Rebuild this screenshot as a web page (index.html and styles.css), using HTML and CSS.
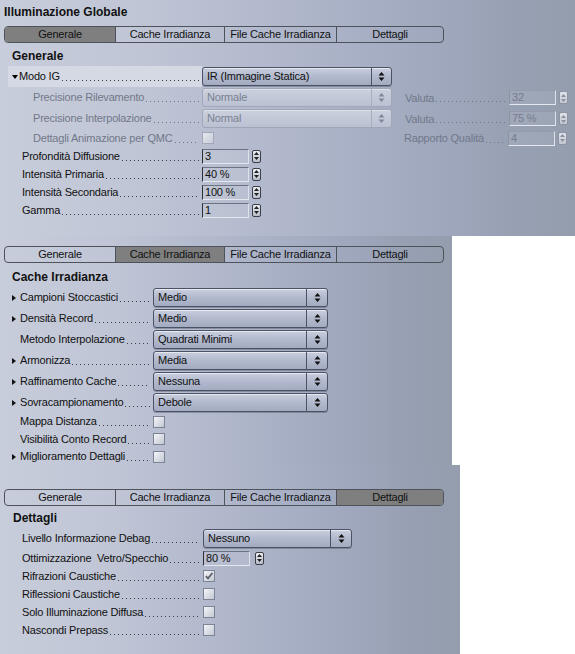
FILE: index.html
```html
<!DOCTYPE html>
<html lang="it">
<head>
    <meta charset="UTF-8">
    <title>Illuminazione Globale</title>
    <link rel="stylesheet" href="styles.css">
</head>
<body>
    <!-- pannello 1: Generale -->
    <div class="panel p1">
        <div class="title">Illuminazione Globale</div>
        <div class="tabs">
            <div class="tab t1 active">Generale</div>
            <div class="tab t2">Cache Irradianza</div>
            <div class="tab t3">File Cache Irradianza</div>
            <div class="tab t4">Dettagli</div>
        </div>
        <div class="heading">Generale</div>
        <div class="rows w1">
            <div class="row sel">
                <div class="lab hl tri-pad"><span class="tri down"></span>Modo IG<span class="dots"></span></div>
                <div class="select s1"><span class="val">IR (Immagine Statica)</span><span class="arr"><svg width="7" height="9" viewBox="0 0 7 9"><path d="M3.5 0L6.5 3.5H0.5z M3.5 9L0.5 5.5H6.5z" fill="#111"/></svg></span></div>
            </div>
            <div class="row sel">
                <div class="lab off">Precisione Rilevamento<span class="dots"></span></div>
                <div class="select s1 dis"><span class="val">Normale</span><span class="arr"><svg width="7" height="9" viewBox="0 0 7 9"><path d="M3.5 0L6.5 3.5H0.5z M3.5 9L0.5 5.5H6.5z" fill="#80879a"/></svg></span></div>
                <div class="lab2">Valuta<span class="dots"></span></div>
                <div class="field dis">32</div>
                <div class="spin dis"><svg width="5" height="8" viewBox="0 0 5 8"><path d="M2.5 0L5 3H0z M2.5 8L0 5H5z" fill="#8a90a0"/></svg></div>
            </div>
            <div class="row sel">
                <div class="lab off">Precisione Interpolazione<span class="dots"></span></div>
                <div class="select s1 dis"><span class="val">Normal</span><span class="arr"><svg width="7" height="9" viewBox="0 0 7 9"><path d="M3.5 0L6.5 3.5H0.5z M3.5 9L0.5 5.5H6.5z" fill="#80879a"/></svg></span></div>
                <div class="lab2">Valuta<span class="dots"></span></div>
                <div class="field dis">75 %</div>
                <div class="spin dis"><svg width="5" height="8" viewBox="0 0 5 8"><path d="M2.5 0L5 3H0z M2.5 8L0 5H5z" fill="#8a90a0"/></svg></div>
            </div>
            <div class="row num">
                <div class="lab off">Dettagli Animazione per QMC<span class="dots"></span></div>
                <div class="check dis"></div>
                <div class="lab2 shift">Rapporto Qualità<span class="dots"></span></div>
                <div class="field dis">4</div>
                <div class="spin dis"><svg width="5" height="8" viewBox="0 0 5 8"><path d="M2.5 0L5 3H0z M2.5 8L0 5H5z" fill="#8a90a0"/></svg></div>
            </div>
            <div class="row num">
                <div class="lab">Profondità Diffusione<span class="dots"></span></div>
                <div class="field">3</div>
                <div class="spin"><svg width="5" height="8" viewBox="0 0 5 8"><path d="M2.5 0L5 3H0z M2.5 8L0 5H5z" fill="#222"/></svg></div>
            </div>
            <div class="row num">
                <div class="lab">Intensità Primaria<span class="dots"></span></div>
                <div class="field">40 %</div>
                <div class="spin"><svg width="5" height="8" viewBox="0 0 5 8"><path d="M2.5 0L5 3H0z M2.5 8L0 5H5z" fill="#222"/></svg></div>
            </div>
            <div class="row num">
                <div class="lab">Intensità Secondaria<span class="dots"></span></div>
                <div class="field">100 %</div>
                <div class="spin"><svg width="5" height="8" viewBox="0 0 5 8"><path d="M2.5 0L5 3H0z M2.5 8L0 5H5z" fill="#222"/></svg></div>
            </div>
            <div class="row num">
                <div class="lab">Gamma<span class="dots"></span></div>
                <div class="field">1</div>
                <div class="spin"><svg width="5" height="8" viewBox="0 0 5 8"><path d="M2.5 0L5 3H0z M2.5 8L0 5H5z" fill="#222"/></svg></div>
            </div>
        </div>
    </div>

    <!-- pannello 2: Cache Irradianza -->
    <div class="panel p2">
        <div class="tabs">
            <div class="tab t1">Generale</div>
            <div class="tab t2 active">Cache Irradianza</div>
            <div class="tab t3">File Cache Irradianza</div>
            <div class="tab t4">Dettagli</div>
        </div>
        <div class="heading">Cache Irradianza</div>
        <div class="rows w2">
            <div class="row sel">
                <div class="lab tri-pad"><span class="tri right"></span>Campioni Stoccastici<span class="dots"></span></div>
                <div class="select s2"><span class="val">Medio</span><span class="arr"><svg width="7" height="9" viewBox="0 0 7 9"><path d="M3.5 0L6.5 3.5H0.5z M3.5 9L0.5 5.5H6.5z" fill="#111"/></svg></span></div>
            </div>
            <div class="row sel">
                <div class="lab tri-pad"><span class="tri right"></span>Densità Record<span class="dots"></span></div>
                <div class="select s2"><span class="val">Medio</span><span class="arr"><svg width="7" height="9" viewBox="0 0 7 9"><path d="M3.5 0L6.5 3.5H0.5z M3.5 9L0.5 5.5H6.5z" fill="#111"/></svg></span></div>
            </div>
            <div class="row sel">
                <div class="lab">Metodo Interpolazione<span class="dots"></span></div>
                <div class="select s2"><span class="val">Quadrati Minimi</span><span class="arr"><svg width="7" height="9" viewBox="0 0 7 9"><path d="M3.5 0L6.5 3.5H0.5z M3.5 9L0.5 5.5H6.5z" fill="#111"/></svg></span></div>
            </div>
            <div class="row sel">
                <div class="lab tri-pad"><span class="tri right"></span>Armonizza<span class="dots"></span></div>
                <div class="select s2"><span class="val">Media</span><span class="arr"><svg width="7" height="9" viewBox="0 0 7 9"><path d="M3.5 0L6.5 3.5H0.5z M3.5 9L0.5 5.5H6.5z" fill="#111"/></svg></span></div>
            </div>
            <div class="row sel">
                <div class="lab tri-pad"><span class="tri right"></span>Raffinamento Cache<span class="dots"></span></div>
                <div class="select s2"><span class="val">Nessuna</span><span class="arr"><svg width="7" height="9" viewBox="0 0 7 9"><path d="M3.5 0L6.5 3.5H0.5z M3.5 9L0.5 5.5H6.5z" fill="#111"/></svg></span></div>
            </div>
            <div class="row sel">
                <div class="lab tri-pad"><span class="tri right"></span>Sovracampionamento<span class="dots"></span></div>
                <div class="select s2"><span class="val">Debole</span><span class="arr"><svg width="7" height="9" viewBox="0 0 7 9"><path d="M3.5 0L6.5 3.5H0.5z M3.5 9L0.5 5.5H6.5z" fill="#111"/></svg></span></div>
            </div>
            <div class="row chk">
                <div class="lab">Mappa Distanza<span class="dots"></span></div>
                <div class="check"></div>
            </div>
            <div class="row chk">
                <div class="lab">Visibilità Conto Record<span class="dots"></span></div>
                <div class="check"></div>
            </div>
            <div class="row chk">
                <div class="lab tri-pad"><span class="tri right"></span>Miglioramento Dettagli<span class="dots"></span></div>
                <div class="check"></div>
            </div>
        </div>
    </div>

    <!-- pannello 3: Dettagli -->
    <div class="panel p3">
        <div class="tabs">
            <div class="tab t1">Generale</div>
            <div class="tab t2">Cache Irradianza</div>
            <div class="tab t3">File Cache Irradianza</div>
            <div class="tab t4 active">Dettagli</div>
        </div>
        <div class="heading">Dettagli</div>
        <div class="rows w3">
            <div class="row sel">
                <div class="lab">Livello Informazione Debag<span class="dots"></span></div>
                <div class="select s3"><span class="val">Nessuno</span><span class="arr"><svg width="7" height="9" viewBox="0 0 7 9"><path d="M3.5 0L6.5 3.5H0.5z M3.5 9L0.5 5.5H6.5z" fill="#111"/></svg></span></div>
            </div>
            <div class="row num">
                <div class="lab">Ottimizzazione&nbsp; Vetro/Specchio<span class="dots"></span></div>
                <div class="field">80 %</div>
                <div class="spin"><svg width="5" height="8" viewBox="0 0 5 8"><path d="M2.5 0L5 3H0z M2.5 8L0 5H5z" fill="#222"/></svg></div>
            </div>
            <div class="row num">
                <div class="lab">Rifrazioni Caustiche<span class="dots"></span></div>
                <div class="check"><svg width="10" height="10" viewBox="0 0 10 10"><path d="M1.8 5.2L4 7.4L8.4 2" stroke="#5a5e68" stroke-width="1.7" fill="none"/></svg></div>
            </div>
            <div class="row num">
                <div class="lab">Riflessioni Caustiche<span class="dots"></span></div>
                <div class="check"></div>
            </div>
            <div class="row num">
                <div class="lab">Solo Illuminazione Diffusa<span class="dots"></span></div>
                <div class="check"></div>
            </div>
            <div class="row num">
                <div class="lab">Nascondi Prepass<span class="dots"></span></div>
                <div class="check"></div>
            </div>
        </div>
    </div>
</body>
</html>
```

FILE: styles.css
```css
body {
    margin: 0;
    padding: 0;
    background: #fff;
    font-family: "Liberation Sans", Arial, sans-serif;
    font-size: 11px;
    letter-spacing: -0.2px;
    color: #111;
}

.panel {
    padding-left: 4px;
    box-sizing: border-box;
    overflow: hidden;
    background: linear-gradient(to right, #c8cddb 0%, #bfc5d5 25%, #b0b7cb 50%, #a2aac0 72%, #98a1b4 88%, #939dad 100%);
}

.p1 {
    width: 575px;
    height: 236px;
    padding-top: 5px;
}

.p2 {
    width: 452px;
    height: 229px;
    padding-top: 10px;
}

.p3 {
    width: 460px;
    height: 189px;
    padding-top: 24px;
}

.title {
    font-size: 12px;
    font-weight: bold;
    line-height: 15px;
    letter-spacing: 0;
}

/* barra delle schede */
.tabs {
    display: flex;
    width: 440px;
    height: 17px;
    box-sizing: border-box;
    border: 1px solid #4e525b;
    border-radius: 4px;
    overflow: hidden;
}

.p1 .tabs {
    margin-top: 6px;
}

.tab {
    text-align: center;
    line-height: 15px;
    border-left: 1px solid #4e525b;
    box-sizing: border-box;
}

.t1 { width: 110px; border-left: none; }
.t2 { width: 109px; }
.t3 { width: 112px; }
.t4 { width: 107px; }

.tab.active {
    background: #7f7f7f;
}

.heading {
    font-size: 12px;
    font-weight: bold;
    line-height: 14px;
    letter-spacing: 0;
    margin: 6px 0 3px 8px;
}

.p2 .heading {
    margin: 7px 0 3px 8px;
}

.p3 .heading {
    margin: 5px 0 3px 9px;
}

/* righe dei parametri */
.rows {
    margin-left: 4px;
}

.row {
    display: flex;
    align-items: center;
}

.row.sel { height: 21px; }
.row.num { height: 18px; }
.row.chk { height: 17.5px; }

.lab {
    display: flex;
    align-items: center;
    align-self: stretch;
    box-sizing: border-box;
    padding-left: 14px;
    line-height: 13px;
    white-space: nowrap;
}

.lab.off {
    padding-left: 25px;
    color: #717889;
}

.lab.hl {
    background: #d5d9e3;
}

.w1 .lab { width: 194px; }
.w2 .lab { width: 145px; padding-left: 12px; }
.w3 .lab { width: 195px; }

.w1 .lab.tri-pad,
.w2 .lab.tri-pad {
    padding-left: 4px;
}

/* puntini guida */
.dots {
    flex: 1;
    height: 1px;
    margin: 8px 3px 0 2px;
    background-image: linear-gradient(to right, #3c3f47 1px, transparent 1px);
    background-size: 4px 1px;
    background-repeat: repeat-x;
}

.lab.off .dots,
.lab2 .dots {
    background-image: linear-gradient(to right, #6f7687 1px, transparent 1px);
}

/* triangoli di espansione */
.tri {
    display: inline-block;
    width: 0;
    height: 0;
}

.tri.down {
    border-top: 4px solid #000;
    border-left: 3.5px solid transparent;
    border-right: 3.5px solid transparent;
    margin-right: 1px;
}

.tri.right {
    border-left: 4px solid #111;
    border-top: 3.5px solid transparent;
    border-bottom: 3.5px solid transparent;
    margin-right: 4px;
}

/* menu a tendina */
.select {
    display: flex;
    height: 19px;
    box-sizing: border-box;
    border: 1px solid #4b5266;
    border-radius: 3px;
    background: linear-gradient(#c9cfde, #b4bbcf 45%, #a3abc1);
    box-shadow: inset 0 1px 0 rgba(255, 255, 255, 0.55), 0 1px 0 rgba(60, 66, 82, 0.35);
}

.select .val {
    flex: 1;
    padding-left: 4px;
    line-height: 17px;
    white-space: nowrap;
}

.select .arr {
    width: 19px;
    border-left: 1px solid #4b5266;
    display: flex;
    align-items: center;
    justify-content: center;
}

.s1 { width: 190px; }
.s2 { width: 175px; }
.s2 .arr { width: 20px; }
.s3 { width: 149px; }
.s3 .arr { width: 20px; }

.select.dis {
    border-color: #a0a7b8;
    background: linear-gradient(#cbd0dd, #bac1d2);
    box-shadow: inset 0 1px 0 rgba(255, 255, 255, 0.35);
    color: #7a8192;
}

.select.dis .arr {
    border-left-color: #a7aebe;
}

/* colonna destra del primo pannello */
.lab2 {
    display: flex;
    align-items: center;
    align-self: stretch;
    width: 104px;
    margin-left: 13px;
    color: #717889;
    white-space: nowrap;
}

.lab2.shift {
    margin-left: 190px;
}

/* campi numerici */
.field {
    width: 47px;
    height: 15px;
    box-sizing: border-box;
    border-left: 1px solid #2c2f36;
    border-top: 1px solid #6c7282;
    border-right: 1px solid #dde1ea;
    border-bottom: 1px solid #e4e7ee;
    padding-left: 2px;
    line-height: 13px;
    white-space: nowrap;
    background: rgba(255, 255, 255, 0.08);
}

.field.dis {
    border-left-color: #8d93a2;
    border-top-color: #959bab;
    color: #767d8e;
}

.spin {
    display: flex;
    align-items: center;
    justify-content: center;
    width: 9px;
    height: 13px;
    margin-left: 3px;
    box-sizing: border-box;
    border: 1px solid #3b3e47;
    border-radius: 2px;
    background: linear-gradient(#eceef2, #b8bdc9);
}

.w3 .spin {
    margin-left: 5px;
}

.spin.dis {
    border-color: #8d93a2;
    background: linear-gradient(#e0e3e9, #c3c8d2);
}

/* caselle di spunta */
.check {
    display: flex;
    align-items: center;
    justify-content: center;
    width: 12px;
    height: 12px;
    box-sizing: border-box;
    border: 1px solid #7c8395;
    background: linear-gradient(135deg, #f4f5f8, #c3c8d3);
}

.check.dis {
    border-color: #a2a8b8;
    background: linear-gradient(135deg, #e4e7ed, #c8cdd8);
}
```
